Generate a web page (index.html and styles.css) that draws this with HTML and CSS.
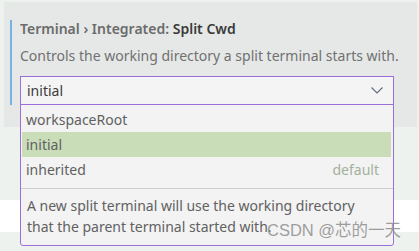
FILE: index.html
```html
<!DOCTYPE html>
<html lang="en">
<head>
  <meta charset="UTF-8">
  <meta name="viewport" content="width=device-width, initial-scale=1.0">
  <title>Split Cwd</title>
  <link rel="stylesheet" href="styles.css">
</head>
<body>
  <div class="setting">
    <div class="setting-body">
      <div class="title"><span class="category">Terminal › Integrated: </span><span class="label">Split Cwd</span></div>
      <div class="desc">Controls the working directory a split terminal starts with.</div>
      <div class="select">
        <span class="value">initial</span>
        <svg class="chevron" width="12" height="7" viewBox="0 0 12 7">
          <path d="M0.5 0.5 L6 6 L11.5 0.5" fill="none" stroke="#5d6b7a" stroke-width="1.1"/>
        </svg>
        <div class="dropdown">
          <div class="option">workspaceRoot</div>
          <div class="option selected">initial</div>
          <div class="option">inherited<span class="hint">default</span></div>
          <div class="option-desc">A new split terminal will use the working directory that the parent terminal started with.</div>
        </div>
      </div>
    </div>
  </div>
  <div class="gap"></div>
  <div class="next-row"></div>
  <div class="watermark">CSDN @芯的一天</div>
</body>
</html>
```

FILE: styles.css
```css
body {
  margin: 0;
  width: 419px;
  height: 251px;
  overflow: hidden;
  background: #eef2ef;
  font-family: "Segoe UI", "Noto Sans", sans-serif;
  font-size: 14px;
  position: relative;
}
.setting {
  margin: 2px 2px 0 4px;
  height: 125px;
  background: #e5e8e7;
  padding-top: 18px;
  box-sizing: border-box;
}
.setting-body {
  margin-left: 6px;
  border-left: 2px solid #75b3e6;
  padding-left: 8px;
}
.title {
  font-size: 14px;
  line-height: 18px;
  font-weight: 600;
  color: #6b6b6b;
}
.title .label {
  color: #3b3b3b;
}
.desc {
  margin-top: 9px;
  line-height: 18px;
  color: #717171;
}
.select {
  position: relative;
  margin-top: 11px;
  width: 374px;
  height: 29px;
  box-sizing: border-box;
  border: 1px solid #9b6fd9;
  background: #f4f4f4;
  display: flex;
  align-items: center;
  justify-content: space-between;
  padding: 0 10px 0 6px;
  color: #3c3c3c;
}
.dropdown {
  position: absolute;
  top: 27px;
  left: -1px;
  width: 374px;
  box-sizing: border-box;
  border: 1px solid #9b6fd9;
  border-radius: 0 0 3px 3px;
  background: #f3f3f3;
  padding-top: 2px;
  color: #616161;
}
.option {
  height: 25px;
  line-height: 25px;
  margin: 0 2px 0 1px;
  padding: 0 12px 0 4px;
  display: flex;
  justify-content: space-between;
}
.option.selected {
  background: #c9ddb9;
}
.hint {
  color: #a3b09e;
}
.option-desc {
  margin-top: 6px;
  border-top: 1px solid #cecece;
  padding: 6px 20px 8px 6px;
  line-height: 21px;
}
.gap {
  height: 73px;
}
.next-row {
  height: 32px;
  background: #ffffff;
}
.watermark {
  position: absolute;
  left: 267px;
  top: 220px;
  font-family: "Liberation Sans", "Noto Sans CJK SC", sans-serif;
  font-size: 16.5px;
  line-height: 20px;
  color: rgba(140, 140, 140, 0.85);
}
```
